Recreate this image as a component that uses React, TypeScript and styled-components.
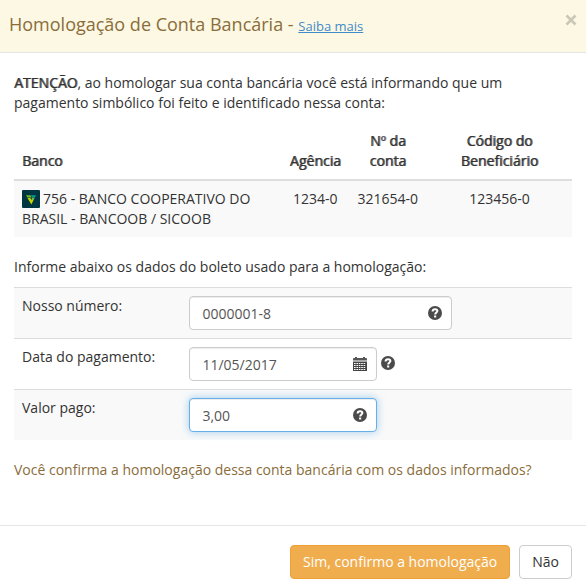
import React from 'react';
import styled, { createGlobalStyle, css } from 'styled-components';

const GlobalStyle = createGlobalStyle`
  *, *::before, *::after { box-sizing: border-box; }
  body {
    margin: 0;
    background: #fff;
    color: #333;
    font-family: 'Open Sans', 'Noto Sans', sans-serif;
    font-size: 14px;
    line-height: 20px;
  }
  button, input { font: inherit; }
`;

/* Heavier look drawn over the regular weight, keeping its letter widths. */
const emboldened = css`
  font-weight: 400;
  text-shadow: 1px 0 0 rgba(51, 51, 51, 0.75);
`;

const Dialog = styled.section`
  width: 100%;
  background: #fff;
`;

const Header = styled.header`
  display: flex;
  align-items: flex-start;
  justify-content: space-between;
  padding: 12px 8px 14px 9px;
  background: #fcf8e3;
  border-bottom: 1px solid #e5e5e5;
`;

const Title = styled.h4`
  margin: 0;
  color: #8a6d3b;
  font-size: 18px;
  font-weight: 400;
  line-height: 24px;
`;

const MoreLink = styled.a`
  color: #428bca;
  font-size: 13px;
  text-decoration: underline;
`;

const CloseButton = styled.button`
  display: flex;
  align-items: center;
  justify-content: center;
  width: 14px;
  height: 16px;
  padding: 0;
  border: 0;
  background: transparent;
  color: #cac7b6;
  cursor: pointer;
`;

const Body = styled.div`
  padding: 20px 14px 45px;
`;

const Paragraph = styled.p`
  margin: 0 0 10px;
`;

const Question = styled.p`
  margin: 0;
  color: #8a6d3b;
`;

const Strong = styled.strong`
  ${emboldened}
`;

const Table = styled.table`
  width: 100%;
  margin-bottom: 20px;
  border-collapse: separate;
  border-spacing: 0;
  table-layout: fixed;
`;

const HeadCell = styled.th<{ $width: string; $align?: 'left' | 'center' }>`
  width: ${(p) => p.$width};
  padding: 8px;
  border-bottom: 2px solid #ddd;
  text-align: ${(p) => p.$align ?? 'center'};
  vertical-align: bottom;
  ${emboldened}
`;

const Cell = styled.td<{ $align?: 'left' | 'center' }>`
  padding: 8px;
  background: #f9f9f9;
  text-align: ${(p) => p.$align ?? 'center'};
  vertical-align: top;
`;

const BankLogo = styled.svg`
  width: 18px;
  height: 18px;
  margin-right: 3px;
  vertical-align: -4px;
`;

const FormRows = styled.div`
  margin-bottom: 20px;
`;

const FormRow = styled.div`
  display: grid;
  grid-template-columns: 30% 70%;
  border-top: 1px solid #ddd;
  &:nth-child(odd) { background: #f9f9f9; }
`;

const FormLabel = styled.label`
  padding: 8px;
`;

const FieldCell = styled.div`
  display: flex;
  padding: 8px;
`;

const InputBox = styled.div<{ $width: string }>`
  position: relative;
  width: ${(p) => p.$width};
`;

const TextInput = styled.input<{ $active?: boolean }>`
  display: block;
  width: 100%;
  height: 34px;
  padding: 6px 36px 6px 12px;
  border: 1px solid ${(p) => (p.$active ? '#66afe9' : '#ccc')};
  border-radius: 4px;
  outline: 0;
  background: #fff;
  color: #555;
  box-shadow: inset 0 1px 1px rgba(0, 0, 0, 0.075)
    ${(p) => (p.$active ? ', 0 0 8px rgba(102, 175, 233, 0.6)' : '')};
`;

const IconButton = styled.button<{ $inside?: boolean }>`
  display: block;
  width: 14px;
  height: 14px;
  padding: 0;
  border: 0;
  background: transparent;
  color: #4a4a4a;
  cursor: pointer;
  ${(p) =>
    p.$inside
      ? css`
          position: absolute;
          top: 10px;
          right: 10px;
        `
      : css`
          margin: 9px 0 0 4px;
        `}
  svg { display: block; }
`;

const Footer = styled.footer`
  display: flex;
  justify-content: flex-end;
  gap: 9px;
  padding: 19px 14px 9px;
  border-top: 1px solid #e5e5e5;
`;

const Button = styled.button<{ $primary?: boolean }>`
  height: 34px;
  padding: 6px 12px;
  border: 1px solid ${(p) => (p.$primary ? '#eea236' : '#ccc')};
  border-radius: 4px;
  background: ${(p) => (p.$primary ? '#f0ad4e' : '#fff')};
  color: ${(p) => (p.$primary ? '#fff' : '#333')};
  cursor: pointer;
`;

const HelpIcon = () => (
  <svg width="14" height="14" viewBox="0 0 14 14" aria-hidden="true">
    <circle cx="7" cy="7" r="7" fill="currentColor" />
    <path
      d="M4.6 5.5C4.6 3.9 5.6 3.2 7.1 3.2S9.4 4 9.4 5.1C9.4 6.5 7.2 6.6 7.2 8.5"
      fill="none"
      stroke="#fff"
      strokeWidth="2"
    />
    <rect x="6.1" y="9.5" width="2.1" height="2" fill="#fff" />
  </svg>
);

const CalendarIcon = () => (
  <svg width="14" height="14" viewBox="0 0 14 14" aria-hidden="true">
    <path d="M0 3V1.6L1 1h1V0h2v1h6V0h2v1h1l1 .6V3z" fill="#555" />
    <path d="M0 3h14v2H0z" fill="#aaa" />
    <path d="M0 5h14v9H0z" fill="#444" />
    <path
      d="M1 6.5h12M1 8.5h12M1 10.5h12M1 12.5h12"
      stroke="#fff"
      strokeWidth="1.1"
      strokeDasharray="1.6 .8"
      fill="none"
    />
  </svg>
);

const SicoobLogo = () => (
  <BankLogo viewBox="0 0 18 18" role="img" aria-label="Sicoob">
    <rect width="18" height="18" rx="1" fill="#003641" />
    <path d="M4 5.2h4.4l1.2 2.4H5.3z" fill="#7db61c" />
    <path d="M8.8 5.2H14l-1.2 2.4H10z" fill="#00a091" />
    <path d="M5.5 8h2.8l1.2 2h2.1L9.3 14.6z" fill="#c9d200" />
    <path d="M10 7.8h2.7l-1.1 2.1H9.4z" fill="#7cc04b" />
  </BankLogo>
);

export default function App() {
  return (
    <>
      <GlobalStyle />
      <Dialog role="dialog" aria-labelledby="dialog-title">
        <Header>
          <Title id="dialog-title">
            Homologação de Conta Bancária - <MoreLink href="#saiba-mais">Saiba mais</MoreLink>
          </Title>
          <CloseButton type="button" aria-label="Fechar">
            <svg width="12" height="12" viewBox="0 0 12 12" aria-hidden="true">
              <path d="M1.5 1.5l9 9M10.5 1.5l-9 9" stroke="currentColor" strokeWidth="2.6" />
            </svg>
          </CloseButton>
        </Header>
        <Body>
          <Paragraph>
            <Strong>ATENÇÃO</Strong>, ao homologar sua conta bancária você está informando que um
            pagamento simbólico foi feito e identificado nessa conta:
          </Paragraph>
          <Table>
            <thead>
              <tr>
                <HeadCell $width="48%" $align="left">Banco</HeadCell>
                <HeadCell $width="12%">Agência</HeadCell>
                <HeadCell $width="14%">Nº da conta</HeadCell>
                <HeadCell $width="26%">Código do Beneficiário</HeadCell>
              </tr>
            </thead>
            <tbody>
              <tr>
                <Cell $align="left">
                  <SicoobLogo />
                  756 - BANCO COOPERATIVO DO BRASIL - BANCOOB / SICOOB
                </Cell>
                <Cell>1234-0</Cell>
                <Cell>321654-0</Cell>
                <Cell>123456-0</Cell>
              </tr>
            </tbody>
          </Table>
          <Paragraph>Informe abaixo os dados do boleto usado para a homologação:</Paragraph>
          <FormRows>
            <FormRow>
              <FormLabel htmlFor="nosso-numero">Nosso número:</FormLabel>
              <FieldCell>
                <InputBox $width="70%">
                  <TextInput id="nosso-numero" type="text" defaultValue="0000001-8" />
                  <IconButton $inside type="button" aria-label="Ajuda sobre nosso número">
                    <HelpIcon />
                  </IconButton>
                </InputBox>
              </FieldCell>
            </FormRow>
            <FormRow>
              <FormLabel htmlFor="data-pagamento">Data do pagamento:</FormLabel>
              <FieldCell>
                <InputBox $width="50%">
                  <TextInput id="data-pagamento" type="text" defaultValue="11/05/2017" />
                  <IconButton $inside type="button" aria-label="Abrir calendário">
                    <CalendarIcon />
                  </IconButton>
                </InputBox>
                <IconButton type="button" aria-label="Ajuda sobre data do pagamento">
                  <HelpIcon />
                </IconButton>
              </FieldCell>
            </FormRow>
            <FormRow>
              <FormLabel htmlFor="valor-pago">Valor pago:</FormLabel>
              <FieldCell>
                <InputBox $width="50%">
                  <TextInput id="valor-pago" type="text" defaultValue="3,00" $active />
                  <IconButton $inside type="button" aria-label="Ajuda sobre valor pago">
                    <HelpIcon />
                  </IconButton>
                </InputBox>
              </FieldCell>
            </FormRow>
          </FormRows>
          <Question>
            Você confirma a homologação dessa conta bancária com os dados informados?
          </Question>
        </Body>
        <Footer>
          <Button type="button" $primary>Sim, confirmo a homologação</Button>
          <Button type="button">Não</Button>
        </Footer>
      </Dialog>
    </>
  );
}
